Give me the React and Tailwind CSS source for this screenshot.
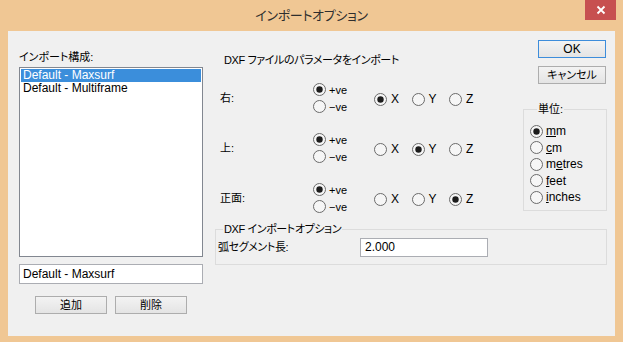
import React from "react";

// Win8-style radio circle
const Radio = ({ on }) => (
  <svg width="13" height="13" viewBox="0 0 13 13" className="shrink-0">
    <circle cx="6.5" cy="6.5" r="6" fill="#f6f6f6" stroke="#6a6a6a" />
    {on && <circle cx="6.5" cy="6.5" r="3.2" fill="#1c1c1c" />}
  </svg>
);

const Button = ({ children, primary, className = "" }) => (
  <button
    className={`h-[18px] flex items-center justify-center text-[11px] leading-[16px] bg-linear-to-b from-[#f3f3f3] to-[#e4e4e4] border ${
      primary ? "border-[#3d8ddb]" : "border-[#adadad]"
    } ${className}`}
  >
    {children}
  </button>
);

const AxisRow = ({ label, plus, axis }) => (
  <div className="flex items-center h-[34px]">
    <div className="w-[98px] pl-[5px] text-[11px] leading-[16px]">{label}</div>
    <div className="w-[61px] flex flex-col">
      <div className="h-[17px] flex items-center gap-[3px]">
        <Radio on={plus} />
        <span className="text-[11px] leading-[14px]">+ve</span>
      </div>
      <div className="h-[17px] flex items-center gap-[3px]">
        <Radio on={!plus} />
        <span className="text-[11px] leading-[14px]">−ve</span>
      </div>
    </div>
    <div className="flex pt-[2px]">
      {["X", "Y", "Z"].map((a) => (
        <div key={a} className="w-[37.5px] flex items-center gap-[4px]">
          <Radio on={axis === a} />
          <span className="leading-[14px]">{a}</span>
        </div>
      ))}
    </div>
  </div>
);

const units = [
  { key: "mm", pre: "", u: "m", post: "m", on: true },
  { key: "cm", pre: "", u: "c", post: "m" },
  { key: "metres", pre: "m", u: "e", post: "tres" },
  { key: "feet", pre: "", u: "f", post: "eet" },
  { key: "inches", pre: "", u: "i", post: "nches" },
];

export default function App() {
  return (
    <div className="w-[623px] h-[342px] bg-[#f0c794] flex flex-col text-[12px] text-black font-['Liberation_Sans','Noto_Sans_CJK_JP',sans-serif] [font-feature-settings:'palt']">
      {/* Title bar */}
      <div className="h-[31px] grid grid-cols-[1fr_auto_1fr] items-start">
        <div />
        <div className="pt-[6px] text-[13px] tracking-[-0.3px] leading-[20px] text-[#2e2e2e]">インポートオプション</div>
        <div className="flex justify-end pr-[7px]">
          <div className="w-[31px] h-[20px] bg-[#c75050] flex items-center justify-center">
            <svg width="10" height="10" viewBox="0 0 10 10">
              <path d="M1.5 1.5 L8.5 8.5 M8.5 1.5 L1.5 8.5" stroke="#fff" strokeWidth="1.8" />
            </svg>
          </div>
        </div>
      </div>

      {/* Client area */}
      <div className="mx-[8px] mb-[6px] flex-1 bg-[#f0f0f0] flex pt-[9px] pl-[11px] pr-[8px]">
        {/* Left column */}
        <div className="w-[184px] flex flex-col">
          <div className="mt-[9px] h-[16px] text-[11px] leading-[16px]">インポート構成:</div>
          <div className="mt-[2px] h-[190px] border border-[#828790] bg-white p-[1px]">
            <div className="h-[13px] leading-[13px] pl-[2px] bg-[#3b8edb] text-white">Default - Maxsurf</div>
            <div className="h-[13px] leading-[13px] pl-[2px]">Default - Multiframe</div>
          </div>
          <div className="mt-[7px] h-[20px] border border-[#abadb3] bg-white pl-[3px] leading-[18px]">
            Default - Maxsurf
          </div>
          <div className="mt-[12px] flex justify-center gap-[8px]">
            <Button className="w-[72px]">追加</Button>
            <Button className="w-[72px]">削除</Button>
          </div>
        </div>

        {/* Right section */}
        <div className="ml-[12px] flex-1 flex flex-col">
          <div className="h-[182px] flex">
            <div className="w-[308px] flex flex-col">
              <div className="mt-[12px] pl-[9px] h-[16px] text-[11px] tracking-[-0.4px] leading-[16px]">
                DXF ファイルのパラメータをインポート
              </div>
              <div className="mt-[13px] flex flex-col gap-[16px]">
                <AxisRow label="右:" plus axis="X" />
                <AxisRow label="上:" plus axis="Y" />
                <AxisRow label="正面:" plus axis="Z" />
              </div>
            </div>
            <div className="w-[84px] flex flex-col">
              <Button primary className="ml-auto mr-[1px] w-[68px] text-[12px]">OK</Button>
              <Button className="mt-[8px] ml-auto mr-[1px] w-[68px]">キャンセル</Button>
              <fieldset className="mt-[18px] h-[109px] border border-[#dcdcdc] pl-[6px] pt-[7px]">
                <legend className="ml-[7px] px-[1px] text-[11px] leading-[14px]">単位:</legend>
                {units.map((u) => (
                  <div key={u.key} className="h-[16.5px] flex items-center gap-[3px]">
                    <Radio on={u.on} />
                    <span className="leading-[14px]">
                      {u.pre}
                      <span className="underline">{u.u}</span>
                      {u.post}
                    </span>
                  </div>
                ))}
              </fieldset>
            </div>
          </div>

          <fieldset className="h-[43px] border border-[#dcdcdc]">
            <legend className="ml-[7px] px-[1px] text-[11px] tracking-[-0.4px] leading-[14px]">
              DXF インポートオプション
            </legend>
            <div className="mt-[1px] h-[20px] flex items-center">
              <div className="w-[144px] pl-[2px] text-[11px] tracking-[-0.4px] leading-[16px]">弧セグメント長:</div>
              <div className="w-[128px] h-[19px] border border-[#abadb3] bg-white pl-[4px] leading-[17px]">2.000</div>
            </div>
          </fieldset>
        </div>
      </div>
    </div>
  );
}
